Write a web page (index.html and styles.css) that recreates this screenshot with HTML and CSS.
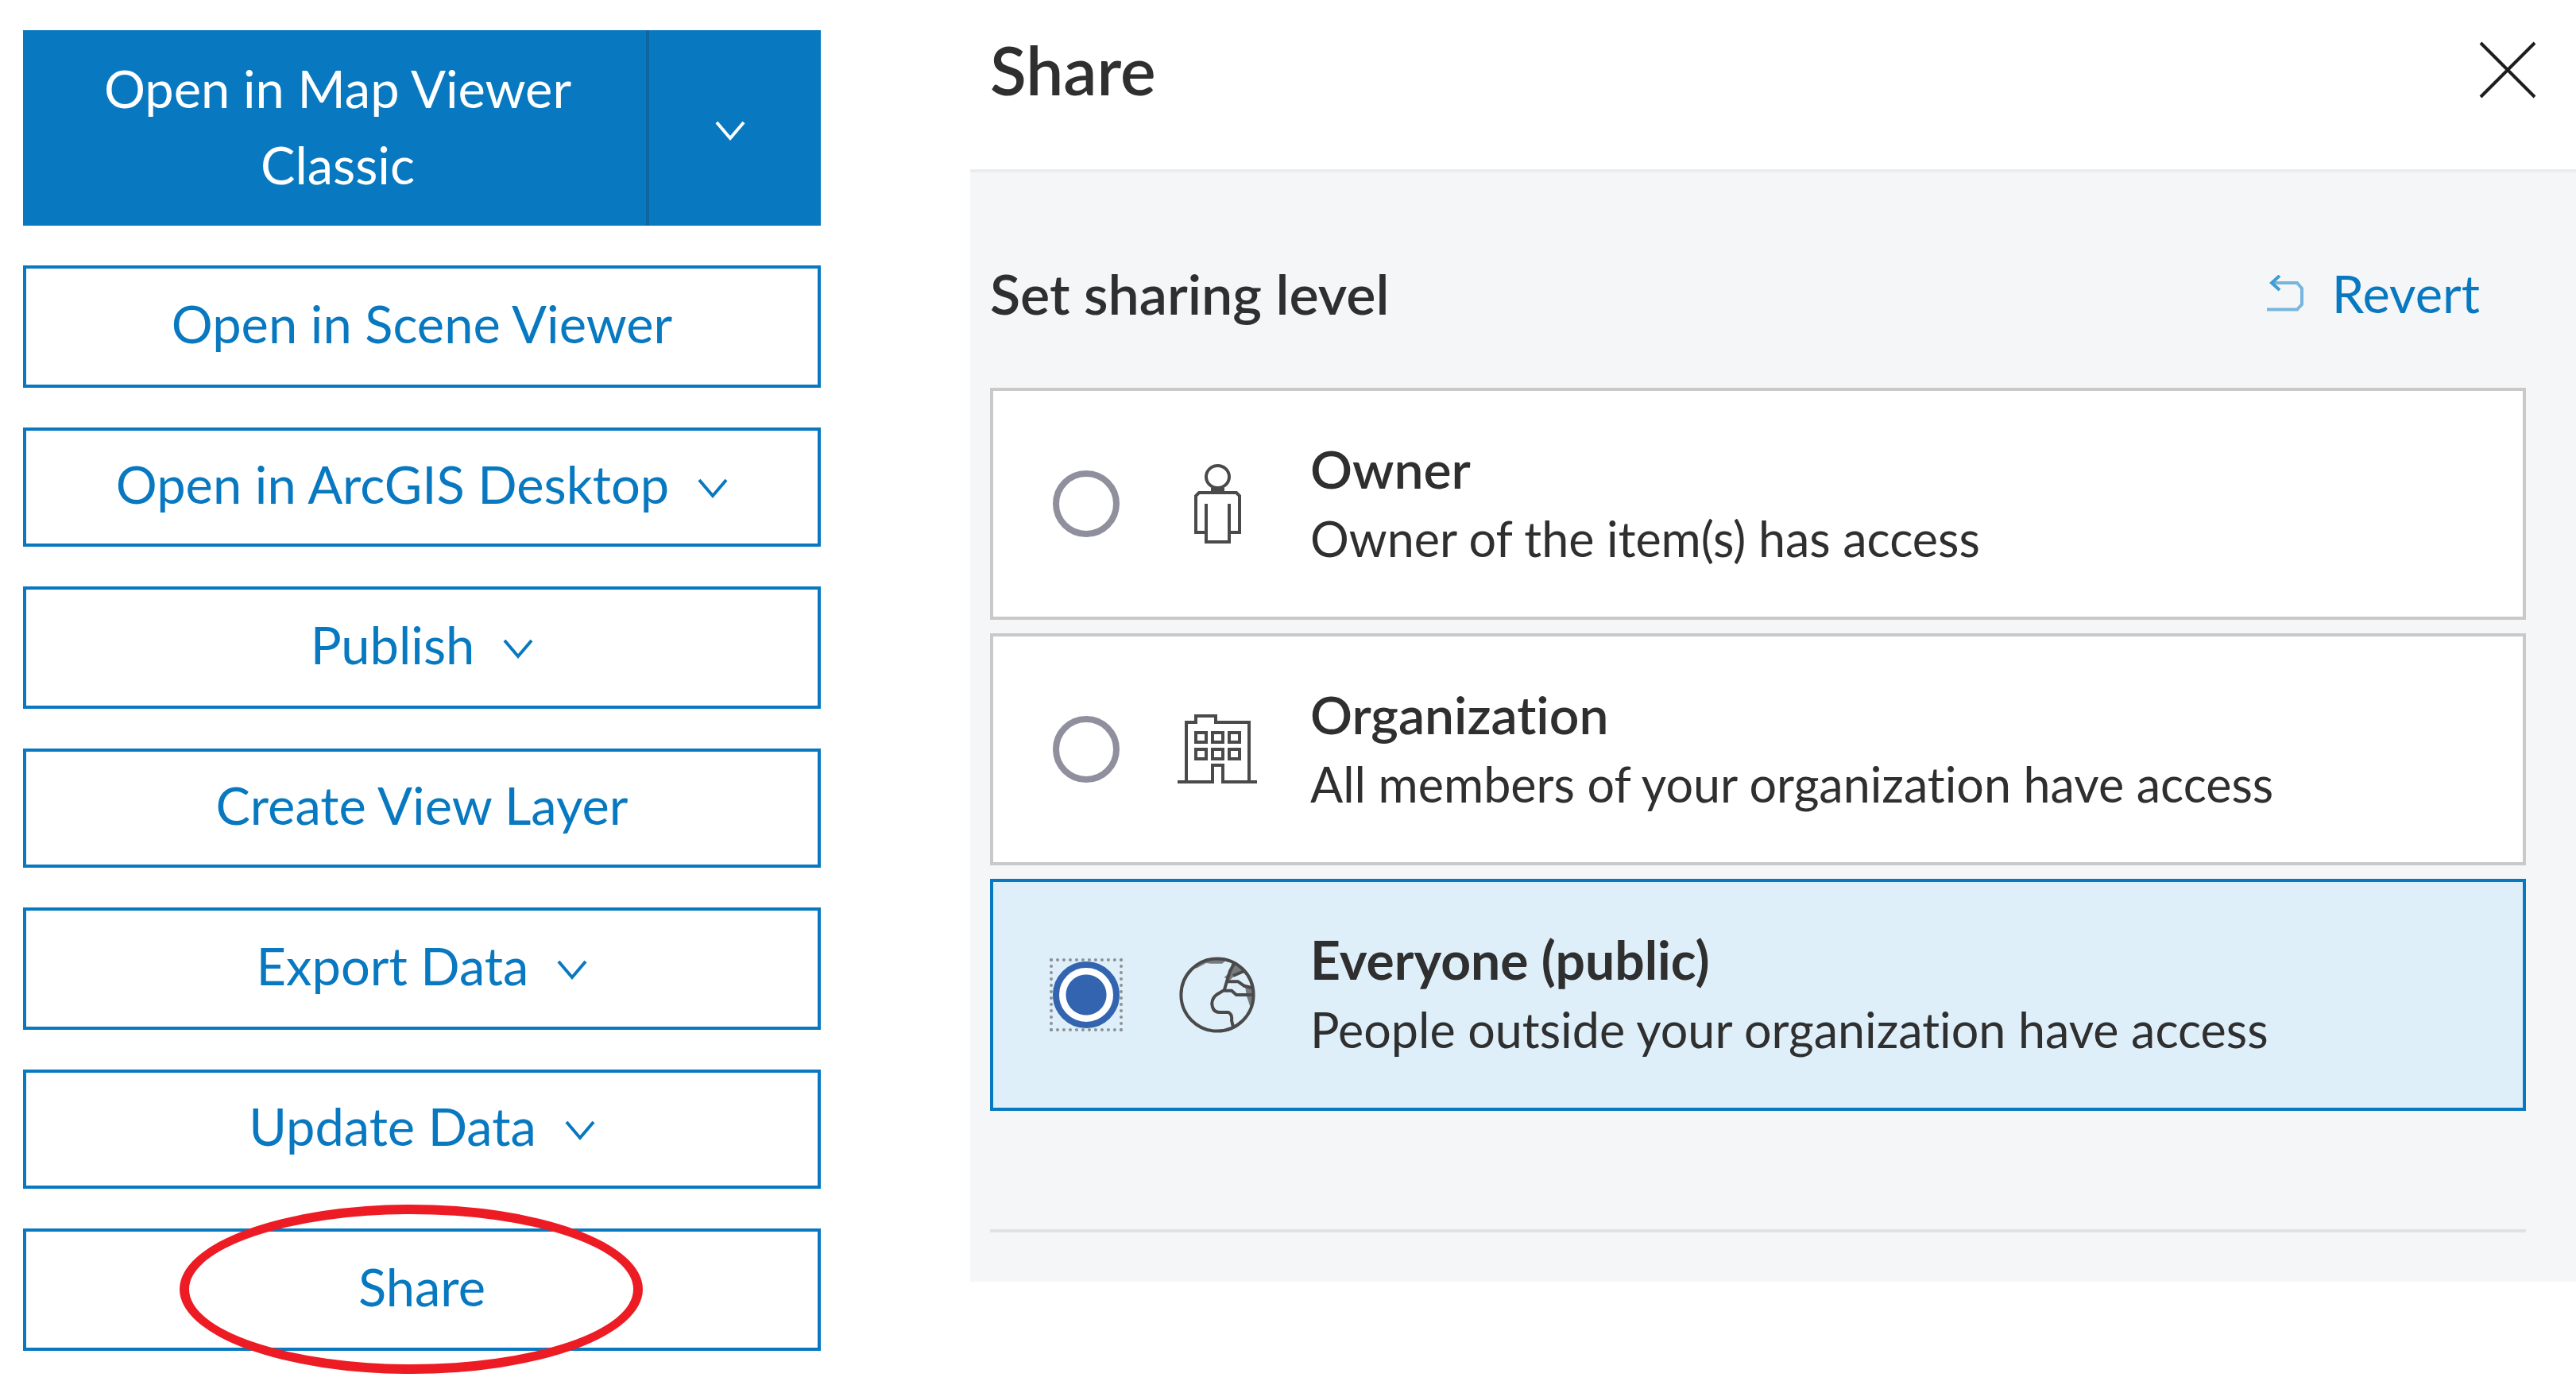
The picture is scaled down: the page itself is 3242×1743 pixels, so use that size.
FILE: index.html
```html
<!DOCTYPE html>
<html lang="en">
<head>
<meta charset="utf-8">
<meta name="viewport" content="width=device-width, initial-scale=1">
<title>Share item</title>
<link rel="stylesheet" href="styles.css">
</head>
<body>
<main class="page">
  <nav class="actions" aria-label="Item actions">
    <div class="split">
      <button type="button" class="split-main">Open in Map Viewer Classic</button>
      <button type="button" class="split-toggle" aria-label="More viewers">
        <svg class="chevron" viewBox="0 0 38 26"><path d="M2 2 19 22 36 2"/></svg>
      </button>
    </div>
    <button type="button" class="action tall">Open in Scene Viewer</button>
    <button type="button" class="action">Open in ArcGIS Desktop
      <svg class="chevron" viewBox="0 0 38 26" aria-hidden="true"><path d="M2 2 19 22 36 2"/></svg>
    </button>
    <button type="button" class="action tall">Publish
      <svg class="chevron" viewBox="0 0 38 26" aria-hidden="true"><path d="M2 2 19 22 36 2"/></svg>
    </button>
    <button type="button" class="action">Create View Layer</button>
    <button type="button" class="action tall">Export Data
      <svg class="chevron" viewBox="0 0 38 26" aria-hidden="true"><path d="M2 2 19 22 36 2"/></svg>
    </button>
    <button type="button" class="action">Update Data
      <svg class="chevron" viewBox="0 0 38 26" aria-hidden="true"><path d="M2 2 19 22 36 2"/></svg>
    </button>
    <div class="highlighted">
      <button type="button" class="action tall">Share</button>
      <span class="ring" aria-hidden="true"></span>
    </div>
  </nav>

  <section class="panel" aria-labelledby="panel-title">
    <header class="panel-header">
      <h1 class="panel-title" id="panel-title">Share</h1>
      <button type="button" class="close" aria-label="Close">
        <svg class="close-icon" viewBox="0 0 72 72"><path d="M2 2 70 70M70 2 2 70"/></svg>
      </button>
    </header>
    <div class="panel-body">
      <div class="level-head">
        <h2 class="level-title" id="level-title">Set sharing level</h2>
        <button type="button" class="revert">
          <svg class="revert-icon" viewBox="0 0 50 46" aria-hidden="true"><path d="M0 43.500H38L44 37V17L38 10H5"/><path class="revert-tip" d="M16 1 6 10 16 19"/></svg>
          Revert
        </button>
      </div>
      <div class="options" role="radiogroup" aria-labelledby="level-title">
        <label class="option">
          <input class="radio" type="radio" name="level" value="owner">
          <svg class="icon" width="59" height="100" viewBox="0 0 59 100" aria-hidden="true">
            <ellipse cx="29.500" cy="16" rx="14.500" ry="14"/>
            <path d="M21 32H38M15 50V98H44V50M15 86H2V40L6 36H53L57 40V86H44"/>
          </svg>
          <span class="option-text">
            <span class="option-title">Owner</span>
            <span class="option-note">Owner of the item(s) has access</span>
          </span>
        </label>
        <label class="option">
          <input class="radio" type="radio" name="level" value="organization">
          <svg class="icon" width="100" height="88" viewBox="0 0 100 88" aria-hidden="true">
            <path d="M0 85H44V64H57V85H100M11 85V10H23V2H48V10H90V85"/>
            <path d="M23 23H36V35H23ZM44 23H57V35H44ZM65 23H78V35H65ZM23 44H36V56H23ZM44 44H57V56H44ZM65 44H78V56H65Z"/>
          </svg>
          <span class="option-text">
            <span class="option-title">Organization</span>
            <span class="option-note">All members of your organization have access</span>
          </span>
        </label>
        <label class="option selected">
          <input class="radio" type="radio" name="level" value="everyone" checked>
          <svg class="icon globe" width="96" height="96" viewBox="0 0 24 24" aria-hidden="true">
            <circle cx="12" cy="12" r="11.400"/>
            <path d="M17.500 1.800 16 4.500 15 7.800 14.200 10.500 12 11.800Q10.300 13 10.300 14.800 10.500 17.500 12.800 17.500H15.500Q16.800 18.200 16.500 20L17 22.200M15 7.800H18.500L20.500 9.200 23 9.800M14.200 10.700H16.500L18 12H23M17 6 20.500 4.500"/>
            <path class="land" d="M8 .8 12 .3 15 1 13.500 2.200H10L8.500 2 5.500 3.600 4.500 3.500ZM16.500 1.500 20.500 4.300 18 5.500 15.800 7.500 14.200 6.500 16.300 4.500ZM20.800 9.500H23.500V13.500L22.600 16.500 21.200 12.300Z"/>
          </svg>
          <span class="option-text">
            <span class="option-title">Everyone (public)</span>
            <span class="option-note">People outside your organization have access</span>
          </span>
        </label>
      </div>
      <hr class="rule">
    </div>
  </section>
</main>
</body>
</html>
```
FILE: styles.css
```css
:root {
  --blue: #0879c0;
  --ink: #2f2f2f;
}

*, *::before { box-sizing: border-box; }

body {
  margin: 0;
  background: #fff;
  color: var(--ink);
  font-family: Lato, "Open Sans", sans-serif;
  font-size: 65px;
  font-variant-ligatures: none;
  line-height: 96px;
}

button {
  margin: 0;
  padding: 0;
  border: 0;
  background: none;
  color: inherit;
  font: inherit;
  font-variant-ligatures: none;
  cursor: pointer;
}

.page {
  display: grid;
  grid-template-columns: minmax(0, 1004fr) minmax(0, 2021fr);
  column-gap: 188px;
  align-items: start;
  padding-left: 29px;
}

/* Item actions */
.actions {
  display: flex;
  flex-direction: column;
  gap: 50px;
  padding: 38px 0;
}

.split {
  display: flex;
  min-height: 246px;
  background: var(--blue);
  color: #fff;
}

.split-main {
  flex: 1;
  padding: 0 76px 4px 84px;
  border-right: 4px solid #11659f;
}

.split-toggle {
  display: flex;
  align-items: center;
  justify-content: center;
  width: 216px;
  padding-right: 12px;
}

.action {
  display: flex;
  align-items: center;
  justify-content: center;
  gap: 36px;
  width: 100%;
  min-height: 150px;
  padding-bottom: 8px;
  border: 4px solid var(--blue);
  background: #fff;
  color: var(--blue);
}

.tall { min-height: 154px; }

.chevron {
  width: 38px;
  height: 26px;
  margin-top: 12px;
  fill: none;
  stroke: currentColor;
  stroke-width: 4;
}

.split-toggle .chevron { margin-top: 8px; }

.highlighted { position: relative; }

.ring {
  position: absolute;
  top: -30px;
  left: calc(50% - 305px);
  width: 583px;
  height: 213px;
  border: 12px solid #ed1c24;
  border-radius: 50%;
  pointer-events: none;
}

/* Share panel */
.panel-header {
  display: flex;
  align-items: center;
  justify-content: space-between;
  padding: 36px 50px 73px 25px;
  border-bottom: 4px solid #eaecee;
}

.panel-title {
  margin: 0;
  font-size: 84px;
  font-weight: 600;
  line-height: 104px;
}

.close { display: flex; }

.close-icon {
  width: 72px;
  height: 72px;
  fill: none;
  stroke: #1e1e1e;
  stroke-width: 4;
}

.panel-body {
  padding: 110px 63px 62px 25px;
  background: #f4f6f8;
}

.level-head {
  display: flex;
  align-items: center;
  justify-content: space-between;
  padding-right: 58px;
  margin-bottom: 77px;
  line-height: 84px;
}

.level-title {
  margin: 0;
  font-size: 70px;
  font-weight: 600;
}

.revert {
  display: flex;
  align-items: center;
  gap: 32px;
  color: var(--blue);
}

.revert-icon {
  width: 50px;
  height: 46px;
  fill: none;
  stroke: #78b6de;
  stroke-width: 4;
}

.revert-tip { stroke: #3f9dd5; }

.options {
  display: flex;
  flex-direction: column;
  gap: 17px;
}

.option {
  display: grid;
  grid-template-columns: 84px 96px 1fr;
  column-gap: 75px;
  align-items: center;
  min-height: 292px;
  padding-left: 75px;
  border: 4px solid #c9c9c9;
  background: #fff;
}

.selected {
  border-color: var(--blue);
  background: #dfeffa;
}

.radio {
  appearance: none;
  width: 84px;
  height: 84px;
  margin: 0;
  border: 8px solid #8f8f9d;
  border-radius: 50%;
  background: #fff;
}

.radio:checked {
  border-color: #3264b0;
  background: radial-gradient(circle, #3264b0 25px, #fff 26px);
}

/* Focus frame of the chosen level */
.selected::before {
  content: "";
  grid-area: 1 / 1;
  width: 92px;
  height: 92px;
  margin-left: -4px;
  border: 4px dotted #8b9196;
}

.selected .radio { grid-area: 1 / 1; }

.icon {
  justify-self: center;
  fill: none;
  stroke: #4a4a4a;
  stroke-width: 4;
}

.globe { stroke-width: 1; }

.land {
  fill: #4a4a4a;
  fill-opacity: .7;
  stroke: none;
}

.option-text {
  display: flex;
  flex-direction: column;
  margin-left: -6px;
  line-height: 88px;
}

.option-title {
  font-size: 66px;
  font-weight: 600;
}

.selected .option-title { font-weight: 700; }

.option-note { font-size: 61px; }

.rule {
  height: 4px;
  margin: 149px 0 0;
  border: 0;
  background: #e0e2e2;
}
```
